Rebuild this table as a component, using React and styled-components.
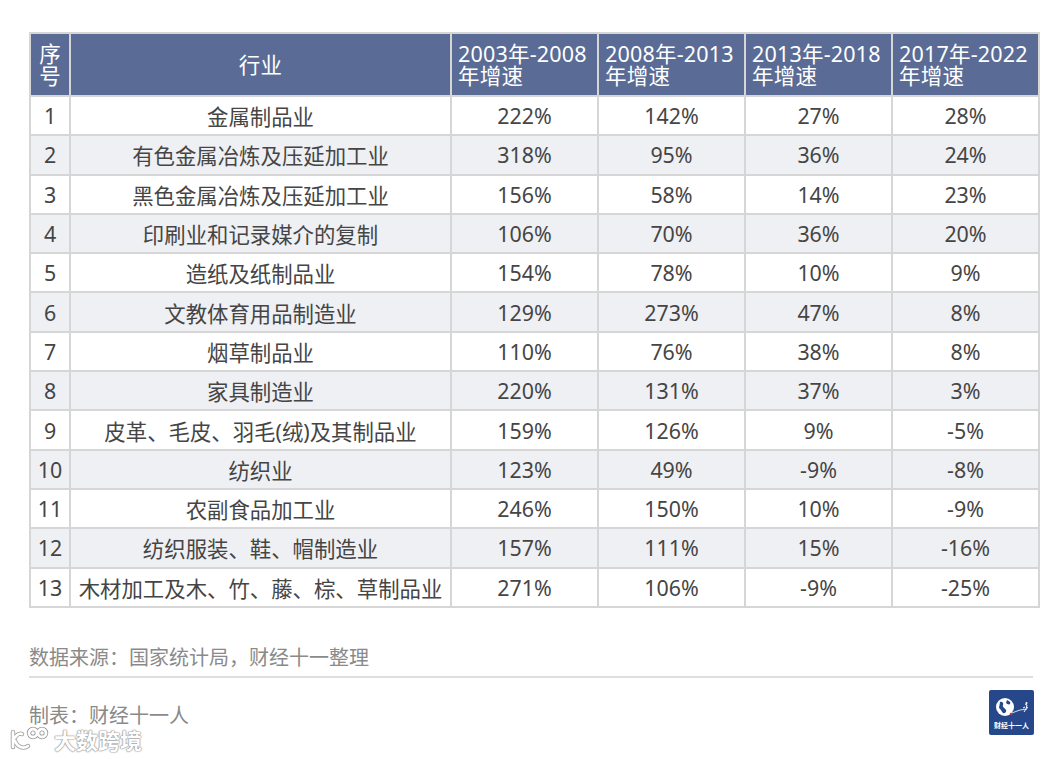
import React from "react";
import styled, { createGlobalStyle } from "styled-components";

const Global = createGlobalStyle`
  html, body { margin: 0; padding: 0; background: #fff; }
  body { font-family: "Noto Sans", "Noto Sans CJK SC", sans-serif; }
`;

const Page = styled.div`
  width: 1062px;
  height: 759px;
  box-sizing: border-box;
  padding: 32px 22px 0 29px;
  position: relative;
  overflow: hidden;
`;

const Table = styled.table`
  border-collapse: collapse;
  width: 1011px;
  table-layout: fixed;
  border: 2px solid #d6d6d6;
`;

const Th = styled.th`
  background: #5a6c95;
  color: #fff;
  font-weight: 400;
  font-size: 21.5px;
  line-height: 22px;
  height: 63px;
  padding: 0 ${(p) => (p.$left ? "6px" : "0")};
  text-align: ${(p) => (p.$left ? "left" : "center")};
  border: 2px solid #d6d6d6;
  border-top: none;
  box-sizing: border-box;
  white-space: nowrap;
  letter-spacing: 0.2px;
  font-family: "Noto Sans", "Noto Sans CJK SC", sans-serif;
`;

const Tr = styled.tr`
  background: ${(p) => (p.$alt ? "#eef0f4" : "#ffffff")};
`;

const Td = styled.td`
  height: 37.3px;
  padding: 0 2px;
  font-size: 21.4px;
  color: #454545;
  text-align: center;
  border: 2px solid #d6d6d6;
  white-space: nowrap;
  font-family: "Noto Sans", "Noto Sans CJK SC", sans-serif;
`;

const Footer = styled.div`
  margin-top: 34px;
  color: #8a8a8a;
  font-size: 20px;
  font-family: "Noto Sans CJK SC", sans-serif;
`;

const Source = styled.div`
  padding-bottom: 5px;
  border-bottom: 2px solid #dedede;
  width: 1004px;
`;

const MakerRow = styled.div`
  display: flex;
  justify-content: space-between;
  align-items: flex-start;
  width: 1005px;
  margin-top: 12px;
`;

const Maker = styled.div`
  margin-top: 10px;
`;

const Logo = styled.div`
  width: 45px;
  height: 45px;
  background: #26488a;
  border-radius: 2px;
  display: flex;
  flex-direction: column;
  align-items: center;
  justify-content: center;
`;

const LogoText = styled.span`
  color: #fff;
  font-size: 7px;
  line-height: 8px;
  font-family: "Noto Sans CJK SC", sans-serif;
  font-weight: 700;
  margin-top: 1px;
`;

const Watermark = styled.div`
  position: absolute;
  left: 8px;
  top: 726px;
  display: flex;
  align-items: center;
  gap: 4px;
  color: #fff;
  font-size: 22px;
  line-height: 26px;
  font-weight: 700;
  font-family: "Noto Sans CJK SC", sans-serif;
  text-shadow: 0 0 1px #888, 0 0 2px #999, 0 0 1px #888;
`;

const headers = ["2003年-2008\n年增速", "2008年-2013\n年增速", "2013年-2018\n年增速", "2017年-2022\n年增速"];

const rows = [
  ["金属制品业", "222%", "142%", "27%", "28%"],
  ["有色金属冶炼及压延加工业", "318%", "95%", "36%", "24%"],
  ["黑色金属冶炼及压延加工业", "156%", "58%", "14%", "23%"],
  ["印刷业和记录媒介的复制", "106%", "70%", "36%", "20%"],
  ["造纸及纸制品业", "154%", "78%", "10%", "9%"],
  ["文教体育用品制造业", "129%", "273%", "47%", "8%"],
  ["烟草制品业", "110%", "76%", "38%", "8%"],
  ["家具制造业", "220%", "131%", "37%", "3%"],
  ["皮革、毛皮、羽毛(绒)及其制品业", "159%", "126%", "9%", "-5%"],
  ["纺织业", "123%", "49%", "-9%", "-8%"],
  ["农副食品加工业", "246%", "150%", "10%", "-9%"],
  ["纺织服装、鞋、帽制造业", "157%", "111%", "15%", "-16%"],
  ["木材加工及木、竹、藤、棕、草制品业", "271%", "106%", "-9%", "-25%"],
];

const GlobeLogo = () => (
  <svg width="36" height="24" viewBox="0 0 36 24">
    <circle cx="11" cy="11" r="9" fill="#fff" />
    <path d="M6 6 C8 5 10 7 9 9 C8 11 11 12 12 14 C13 16 10 18 9 17 C7 15 7 13 5 12 Z" fill="#26488a" />
    <path d="M13 4 C15 5 17 6 16 8 C15 9 13 8 12 7 Z" fill="#26488a" />
    <path d="M15 18 L26 14 L33 13" stroke="#fff" strokeWidth="0.8" fill="none" />
    <circle cx="17" cy="18" r="1.2" fill="#c0304a" />
    <path d="M31 8 L33 9 L32 13 L30 16 M32 11 L34 12 M31 11 L29 12" stroke="#fff" strokeWidth="1" fill="none" />
    <circle cx="32.5" cy="7" r="1" fill="#fff" />
  </svg>
);

const KLogo = () => (
  <svg width="42" height="26" viewBox="0 0 42 26">
    <g stroke="#999" strokeWidth="4.4" fill="none" strokeLinecap="round">
      <path d="M5 6 L5 21" />
      <path d="M5 14 C9 8 12 7 14 8" />
      <path d="M7 15 C10 22 16 23 20 20" />
      <circle cx="25" cy="7" r="4" />
      <circle cx="34" cy="7" r="4" />
    </g>
    <g stroke="#fff" strokeWidth="2.8" fill="none" strokeLinecap="round">
      <path d="M5 6 L5 21" />
      <path d="M5 14 C9 8 12 7 14 8" />
      <path d="M7 15 C10 22 16 23 20 20" />
      <circle cx="25" cy="7" r="4" />
      <circle cx="34" cy="7" r="4" />
    </g>
  </svg>
);

export default function App() {
  return (
    <Page>
      <Global />
      <Table>
        <colgroup>
          <col style={{ width: 40 }} />
          <col style={{ width: 381 }} />
          <col style={{ width: 147 }} />
          <col style={{ width: 147 }} />
          <col style={{ width: 147 }} />
          <col style={{ width: 147 }} />
        </colgroup>
        <thead>
          <tr>
            <Th>序<br />号</Th>
            <Th>行业</Th>
            {headers.map((h) => {
              const [a, b] = h.split("\n");
              return (
                <Th key={h} $left>
                  {a}
                  <br />
                  {b}
                </Th>
              );
            })}
          </tr>
        </thead>
        <tbody>
          {rows.map((r, i) => (
            <Tr key={i} $alt={i % 2 === 1}>
              <Td>{i + 1}</Td>
              {r.map((c, j) => (
                <Td key={j}>{c}</Td>
              ))}
            </Tr>
          ))}
        </tbody>
      </Table>
      <Footer>
        <Source>数据来源：国家统计局，财经十一整理</Source>
        <MakerRow>
          <Maker>制表：财经十一人</Maker>
          <Logo>
            <GlobeLogo />
            <LogoText>财经十一人</LogoText>
          </Logo>
        </MakerRow>
      </Footer>
      <Watermark>
        <KLogo />
        <span>大数跨境</span>
      </Watermark>
    </Page>
  );
}
